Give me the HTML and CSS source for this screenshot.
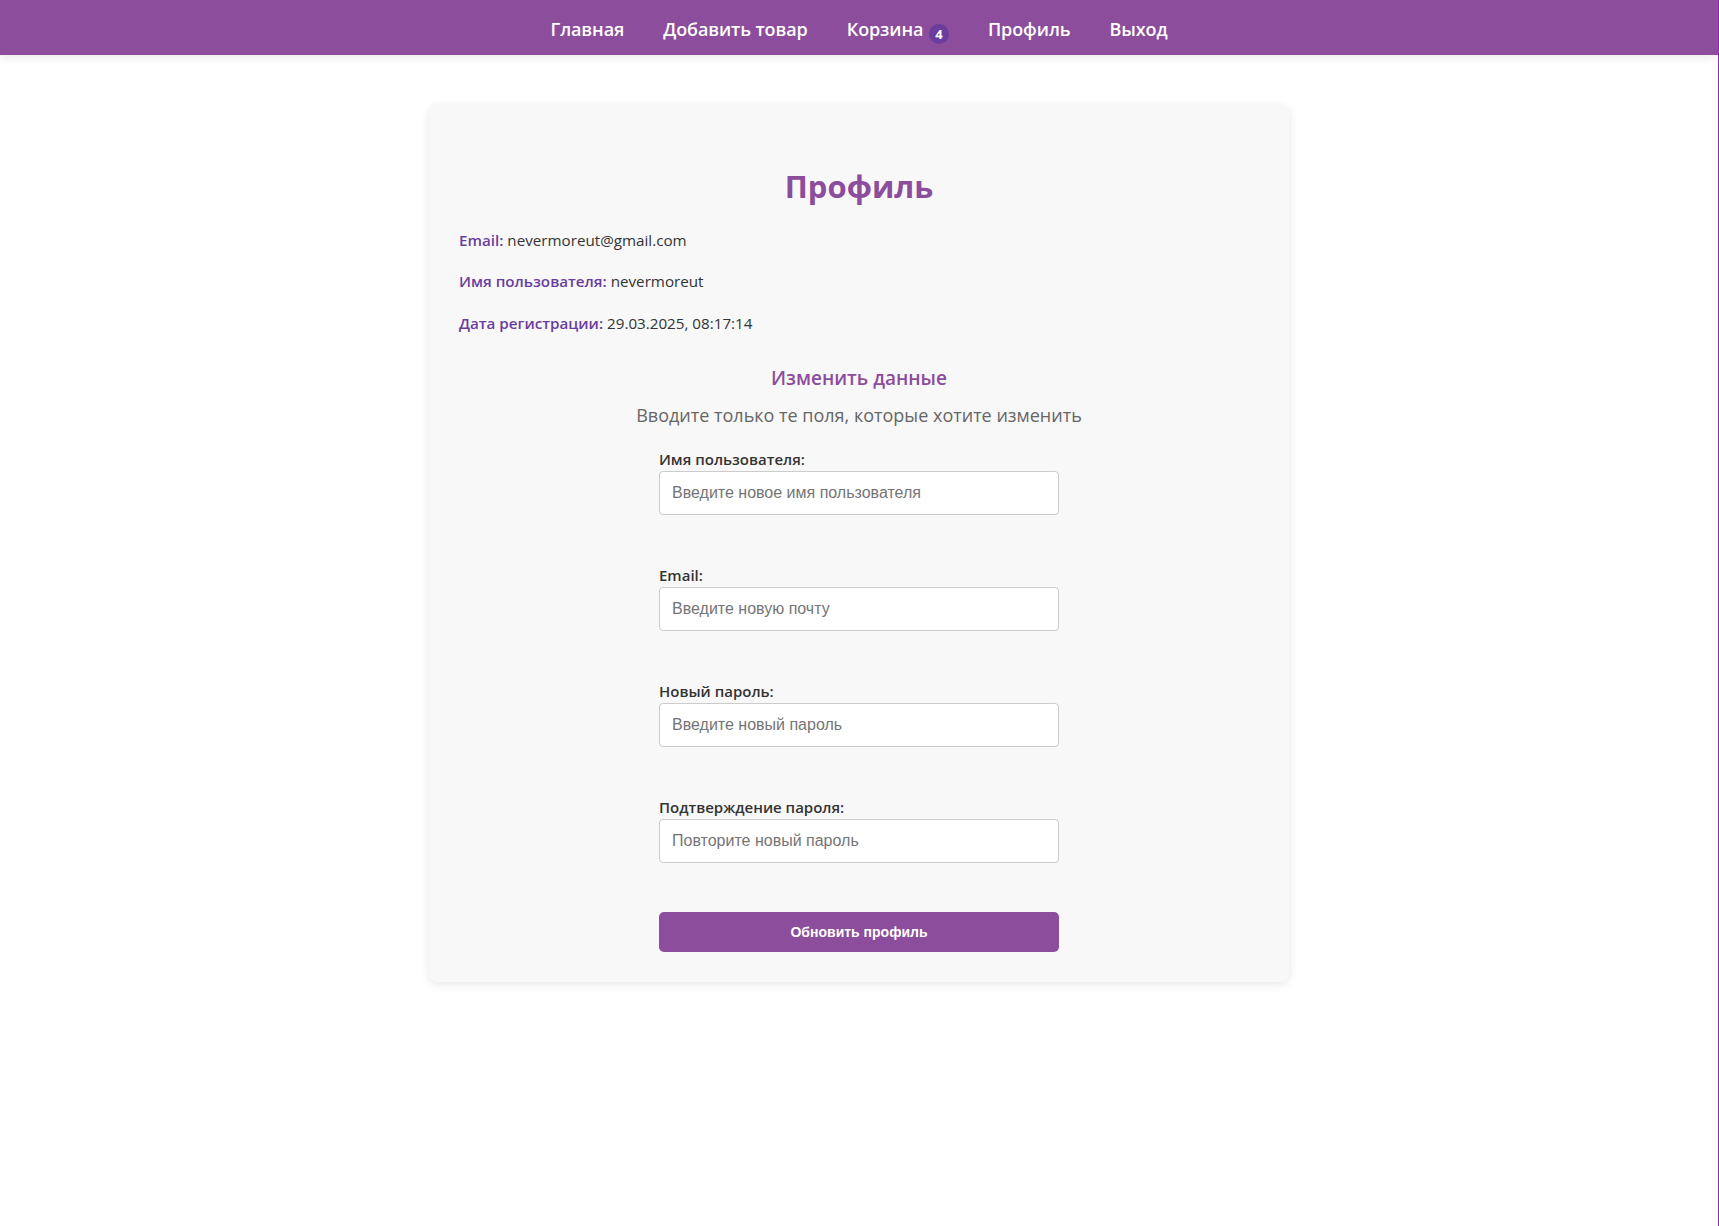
FILE: index.html
```html
<!DOCTYPE html>
<html lang="ru">
<head>
  <meta charset="UTF-8" />
  <title>Профиль</title>
  <meta name="viewport" content="width=device-width, initial-scale=1.0" />
  <link rel="stylesheet" href="styles.css">
</head>
<body>
  <nav class="navbar">
    <a href="#">Главная</a>
    <a href="#">Добавить товар</a>
    <a href="#">Корзина <span class="cart-badge">4</span></a>
    <a href="#">Профиль</a>
    <a href="#">Выход</a>
  </nav>

  <div class="profile-card">
    <h1>Профиль</h1>

    <div class="profile-info">
      <p><strong>Email:</strong> nevermoreut@gmail.com</p>
      <p><strong>Имя пользователя:</strong> nevermoreut</p>
      <p><strong>Дата регистрации:</strong> 29.03.2025, 08:17:14</p>
    </div>

    <h3 class="edit-title">Изменить данные</h3>
    <p class="edit-hint">Вводите только те поля, которые хотите изменить</p>

    <form class="profile-form">
      <div class="form-group">
        <label for="username">Имя пользователя:</label>
        <input type="text" id="username" placeholder="Введите новое имя пользователя" />
      </div>
      <div class="form-group">
        <label for="email">Email:</label>
        <input type="email" id="email" placeholder="Введите новую почту" />
      </div>
      <div class="form-group">
        <label for="password">Новый пароль:</label>
        <input type="password" id="password" placeholder="Введите новый пароль" />
      </div>
      <div class="form-group">
        <label for="confirm">Подтверждение пароля:</label>
        <input type="password" id="confirm" placeholder="Повторите новый пароль" />
      </div>
      <button type="submit">Обновить профиль</button>
    </form>
  </div>
</body>
</html>
```

FILE: styles.css
```css
html {
  min-height: 100%;
  box-sizing: border-box;
  border-right: 1px solid #9426b0;
}
body {
  margin: 0;
  background: #fff;
  font-family: 'Open Sans', 'Noto Sans', sans-serif;
  color: #333;
  line-height: 1.6;
}
.navbar {
  height: 55px;
  box-sizing: border-box;
  padding-top: 4px;
  background: #8b4d9c;
  display: flex;
  justify-content: center;
  align-items: center;
  gap: 39px;
  box-shadow: 0 2px 10px rgba(0, 0, 0, 0.1);
}
.navbar a {
  color: #fff;
  text-decoration: none;
  font-size: 18px;
  font-weight: 600;
  letter-spacing: -0.1px;
}
.cart-badge {
  display: inline-block;
  width: 20px;
  height: 20px;
  margin-left: 1px;
  border-radius: 50%;
  background: #6a3d9e;
  color: #fff;
  font-size: 13px;
  font-weight: 700;
  line-height: 20px;
  text-align: center;
  vertical-align: -3px;
}
.profile-card {
  width: 800px;
  margin: 50px auto;
  padding: 30px;
  background: #f8f8f8;
  border-radius: 8px;
  box-shadow: 0 2px 10px rgba(0, 0, 0, 0.1);
}
.profile-card h1 {
  text-align: center;
  color: #8b4d9c;
  font-size: 31px;
  margin: 27px 0 16px;
}
.profile-info p {
  margin: 16px 0;
  font-size: 15.2px;
  line-height: 25.6px;
}
.profile-info strong {
  color: #6a3d9e;
  font-weight: 600;
}
.edit-title {
  text-align: center;
  color: #8b4d9c;
  font-size: 19px;
  font-weight: 600;
  line-height: 32px;
  margin: 26px 0 7px;
}
.edit-hint {
  text-align: center;
  color: #666;
  font-size: 18px;
  margin: 0 0 18px;
}
.profile-form {
  width: 400px;
  margin: 0 auto;
}
.form-group {
  margin-bottom: 49px;
}
.form-group label {
  display: block;
  font-size: 15px;
  font-weight: 600;
  line-height: 23px;
  color: #333;
}
.form-group input {
  display: block;
  width: 100%;
  box-sizing: border-box;
  padding: 12px;
  border: 1px solid #ccc;
  border-radius: 4px;
  background: #fff;
  font-family: 'Liberation Sans', Arial, sans-serif;
  font-size: 16px;
  outline: none;
}
.form-group input::placeholder {
  color: #757575;
}
.profile-form button {
  display: block;
  width: 100%;
  padding: 12px;
  border: none;
  border-radius: 5px;
  background: #8b4d9c;
  color: #fff;
  font-family: 'Liberation Sans', Arial, sans-serif;
  font-size: 14px;
  font-weight: 700;
  line-height: 16px;
  cursor: pointer;
}
```
